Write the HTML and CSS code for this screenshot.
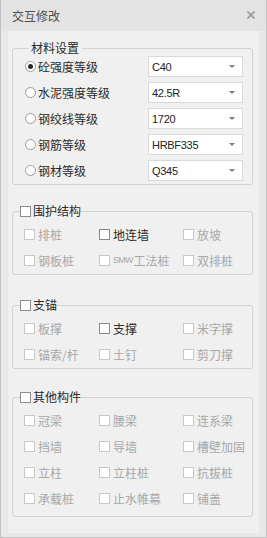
FILE: index.html
```html
<!DOCTYPE html>
<html lang="zh-CN">
<head>
    <meta charset="UTF-8">
    <meta name="viewport" content="width=device-width, initial-scale=1.0">
    <title>交互修改</title>
    <link rel="stylesheet" href="styles.css">
</head>
<body>
    <div class="dialog">
        <!-- Title Bar -->
        <div class="titlebar">
            <span class="title">交互修改</span>
            <svg class="close" width="8" height="8" viewBox="0 0 8 8">
                <path d="M0.5 0.5 L7.5 7.5 M7.5 0.5 L0.5 7.5" stroke="#9a9a9a" stroke-width="1.6" fill="none"/>
            </svg>
        </div>

        <div class="content">
            <div class="panel">
                <!-- Material settings -->
                <fieldset class="group group-material">
                    <legend class="group-title">材料设置</legend>
                    <div class="field-row">
                        <label class="radio-label"><span class="radio checked"></span>砼强度等级</label>
                        <div class="select"><span>C40</span><span class="arrow"></span></div>
                    </div>
                    <div class="field-row">
                        <label class="radio-label"><span class="radio"></span>水泥强度等级</label>
                        <div class="select"><span>42.5R</span><span class="arrow"></span></div>
                    </div>
                    <div class="field-row">
                        <label class="radio-label"><span class="radio"></span>钢绞线等级</label>
                        <div class="select"><span>1720</span><span class="arrow"></span></div>
                    </div>
                    <div class="field-row">
                        <label class="radio-label"><span class="radio"></span>钢筋等级</label>
                        <div class="select"><span>HRBF335</span><span class="arrow"></span></div>
                    </div>
                    <div class="field-row">
                        <label class="radio-label"><span class="radio"></span>钢材等级</label>
                        <div class="select"><span>Q345</span><span class="arrow"></span></div>
                    </div>
                </fieldset>

                <!-- Retaining structure -->
                <fieldset class="group group-retain">
                    <legend class="group-title check-title"><span class="checkbox"></span>围护结构</legend>
                    <div class="check-grid">
                        <label class="check-item disabled"><span class="checkbox"></span>排桩</label>
                        <label class="check-item"><span class="checkbox"></span>地连墙</label>
                        <label class="check-item disabled"><span class="checkbox"></span>放坡</label>
                        <label class="check-item disabled"><span class="checkbox"></span>钢板桩</label>
                        <label class="check-item disabled"><span class="checkbox"></span><span class="latin">SMW</span>工法桩</label>
                        <label class="check-item disabled"><span class="checkbox"></span>双排桩</label>
                    </div>
                </fieldset>

                <!-- Support / anchor -->
                <fieldset class="group group-anchor">
                    <legend class="group-title check-title"><span class="checkbox"></span>支锚</legend>
                    <div class="check-grid">
                        <label class="check-item disabled"><span class="checkbox"></span>板撑</label>
                        <label class="check-item"><span class="checkbox"></span>支撑</label>
                        <label class="check-item disabled"><span class="checkbox"></span>米字撑</label>
                        <label class="check-item disabled"><span class="checkbox"></span>锚索/杆</label>
                        <label class="check-item disabled"><span class="checkbox"></span>土钉</label>
                        <label class="check-item disabled"><span class="checkbox"></span>剪刀撑</label>
                    </div>
                </fieldset>

                <!-- Other members -->
                <fieldset class="group group-other">
                    <legend class="group-title check-title"><span class="checkbox"></span>其他构件</legend>
                    <div class="check-grid">
                        <label class="check-item disabled"><span class="checkbox"></span>冠梁</label>
                        <label class="check-item disabled"><span class="checkbox"></span>腰梁</label>
                        <label class="check-item disabled"><span class="checkbox"></span>连系梁</label>
                        <label class="check-item disabled"><span class="checkbox"></span>挡墙</label>
                        <label class="check-item disabled"><span class="checkbox"></span>导墙</label>
                        <label class="check-item disabled"><span class="checkbox"></span>槽壁加固</label>
                        <label class="check-item disabled"><span class="checkbox"></span>立柱</label>
                        <label class="check-item disabled"><span class="checkbox"></span>立柱桩</label>
                        <label class="check-item disabled"><span class="checkbox"></span>抗拔桩</label>
                        <label class="check-item disabled"><span class="checkbox"></span>承载桩</label>
                        <label class="check-item disabled"><span class="checkbox"></span>止水帷幕</label>
                        <label class="check-item disabled"><span class="checkbox"></span>铺盖</label>
                    </div>
                </fieldset>
            </div>
        </div>
    </div>
</body>
</html>
```

FILE: styles.css
```css
* {
    box-sizing: border-box;
    margin: 0;
    padding: 0;
}
body {
    font-family: "Noto Sans CJK SC", "Liberation Sans", sans-serif;
    font-size: 12px;
    color: #2b2b2b;
    background-color: #fff;
}
.dialog {
    display: flex;
    flex-direction: column;
    width: 267px;
    height: 538px;
    border: 1px solid #c2c2c2;
    border-top: none;
    background-color: #e8e8e8;
}
.titlebar {
    display: flex;
    align-items: center;
    justify-content: space-between;
    height: 31px;
    padding: 0 11px 0 11px;
    background-color: #e3e3e3;
}
.title {
    color: #505050;
    line-height: 16px;
}
.close {
    margin-top: -1px;
}
.content {
    flex: 1;
    padding: 0 7px 4px 7px;
}
.panel {
    height: 100%;
    padding: 9px 6px 0 4px;
    background-color: #f0f0f0;
}
.group {
    min-width: 0;
    border: 1px solid #d3d3d3;
    border-radius: 3px;
}
.group-title {
    margin-left: 4px;
    padding: 0 3px 0 2px;
    line-height: 16px;
    color: #2b2b2b;
}
.check-title {
    display: flex;
    align-items: center;
    margin-left: 7px;
    padding: 0;
}
.check-title .checkbox {
    border-color: #8c8c8c;
    margin-right: 2px;
}

/* material rows */
.group-material {
    display: flex;
    flex-direction: column;
    gap: 5px;
    padding: 0 9px 3px 12px;
}
.field-row {
    display: flex;
    align-items: center;
    justify-content: space-between;
    height: 21px;
}
.radio-label {
    display: flex;
    align-items: center;
}
.radio {
    width: 11px;
    height: 11px;
    margin-right: 2px;
    border: 1px solid #9c9c9c;
    border-radius: 50%;
    background-color: #fff;
    display: flex;
    align-items: center;
    justify-content: center;
}
.radio.checked::after {
    content: "";
    width: 5px;
    height: 5px;
    border-radius: 50%;
    background-color: #2a2a2a;
}
.select {
    display: flex;
    align-items: center;
    justify-content: space-between;
    width: 95px;
    height: 21px;
    padding: 0 7px 0 3px;
    border: 1px solid #d9d9d9;
    background-color: #fff;
    font-family: "Liberation Sans", sans-serif;
    font-size: 11px;
    letter-spacing: -0.3px;
    color: #222;
}
.arrow {
    width: 0;
    height: 0;
    border-left: 3px solid transparent;
    border-right: 3px solid transparent;
    border-top: 3px solid #7c7c7c;
}

/* checkbox groups */
.group-retain {
    margin-top: 18px;
}
.group-anchor {
    margin-top: 22px;
}
.group-other {
    margin-top: 20px;
}
.check-grid {
    display: grid;
    grid-template-columns: 75px 84px 1fr;
    row-gap: 10px;
    padding: 7px 0 6px 11px;
}
.group-other .check-grid {
    padding-bottom: 10px;
}
.check-item {
    display: flex;
    align-items: center;
    height: 16px;
    white-space: nowrap;
}
.checkbox {
    width: 11px;
    height: 11px;
    margin-right: 3px;
    border: 1px solid #8a8a8a;
    background-color: #fff;
}
.check-item.disabled {
    color: #a8a8a8;
}
.check-item.disabled .checkbox {
    border-color: #c8c8c8;
}
.latin {
    font-family: "Liberation Sans", sans-serif;
    font-size: 9px;
    letter-spacing: -0.8px;
    margin-right: 1px;
}
```
